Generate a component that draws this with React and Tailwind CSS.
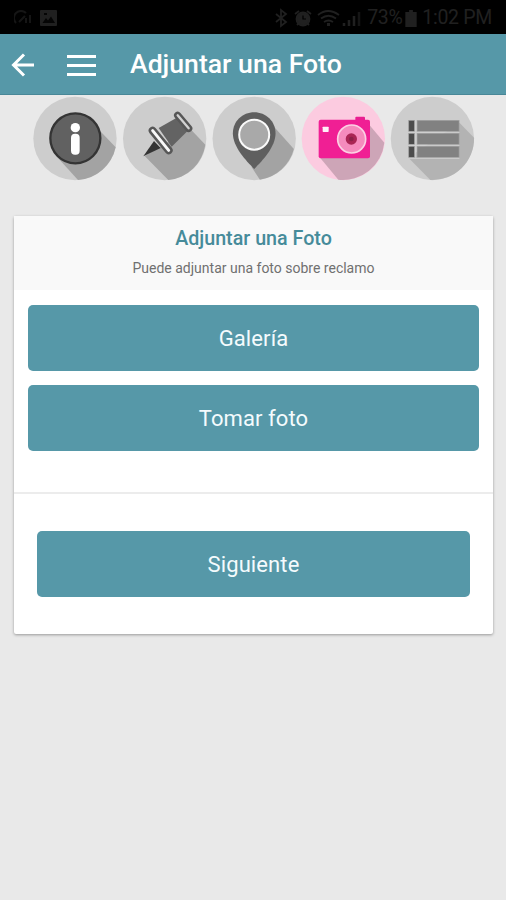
const STEPS = [
    {
        name: "info",
        viewBox: "15 12 252 252",
        art: (
            <>
                <circle cx="141" cy="139.5" r="125" fill="#cdcdcd" />
                <path d="M217 118 L263 166 A125 125 0 0 1 150 264 L88 196 Z" fill="#a3a3a3" />
                <circle cx="142" cy="139" r="75" fill="#616161" stroke="#343434" strokeWidth="7" />
                <circle cx="142" cy="107" r="14" fill="#fff" />
                <rect x="129" y="125" width="26" height="63" rx="12" fill="#fff" />
            </>
        ),
    },
    {
        name: "pin",
        viewBox: "12 12 252 252",
        art: (
            <>
                <circle cx="140" cy="139.5" r="125" fill="#cdcdcd" />
                <path d="M218 112 L262 158 A125 125 0 0 1 151 264 L80 192 L150 150 Z" fill="#a3a3a3" />
                <path d="M76 193 L108 147 L128 168 Z" fill="#343434" />
                <path d="M122 108 L175 78 L208 118 L161 164 Z" fill="#636363" />
                <path d="M104 116 L152 175" stroke="#575757" strokeWidth="24" strokeLinecap="round" />
                <path d="M104 116 L152 175" stroke="#f8f8f8" strokeWidth="9" strokeLinecap="round" />
                <path d="M179 70 L212 109" stroke="#575757" strokeWidth="22" strokeLinecap="round" />
                <path d="M179 70 L212 109" stroke="#d2d2d2" strokeWidth="7" strokeLinecap="round" />
            </>
        ),
    },
    {
        name: "place",
        viewBox: "11.4 12 252 252",
        art: (
            <>
                <circle cx="138" cy="139.5" r="125" fill="#cdcdcd" />
                <path d="M190 96 L257 171 A125 125 0 0 1 155 263 L130 225 Z" fill="#a3a3a3" />
                <path d="M138 61 C173 61 202 88 202 124 C202 164 165 204 138 231 C111 204 74 164 74 124 C74 88 103 61 138 61 Z" fill="#5f5f5f" />
                <circle cx="138" cy="128" r="45" fill="#a9a9a9" stroke="#fafafa" strokeWidth="6" />
            </>
        ),
    },
    {
        name: "photo",
        viewBox: "12 12 252 252",
        art: (
            <>
                <circle cx="139" cy="139.5" r="125" fill="#fccbe0" />
                <path d="M218 100 L262 152 A125 125 0 0 1 124 263 L68 196 Z" fill="#cda5b7" />
                <rect x="175" y="74" width="29" height="18" rx="3" fill="#e91e90" />
                <rect x="65" y="83" width="154" height="116" rx="6" fill="#f01f94" />
                <rect x="77" y="104" width="18" height="16" rx="2" fill="#fff0f8" />
                <circle cx="164" cy="141" r="42" fill="#f58bbd" stroke="#fcd0e4" strokeWidth="5" />
                <circle cx="163" cy="141" r="17" fill="#a92554" />
                <circle cx="163" cy="141" r="7" fill="#8c2148" />
            </>
        ),
    },
    {
        name: "list",
        viewBox: "13.8 12 252 252",
        art: (
            <>
                <circle cx="138" cy="139.5" r="125" fill="#cdcdcd" />
                <path d="M219 92 L263 137 A125 125 0 0 1 132 264 L66 197 Z" fill="#b3b3b3" />
                {[84, 123, 162].map((y) => (
                    <g key={y} stroke="#a0a0a0" strokeWidth="2">
                        <rect x="67" y={y + 1} width="17" height="33" fill="#4c4c4c" />
                        <rect x="92" y={y + 1} width="126" height="33" fill="#818181" />
                        <path d={`M88 ${y} V${y + 35} M66 ${y + 37} H219`} stroke="#cfcfcf" strokeWidth="3" />
                    </g>
                ))}
            </>
        ),
    },
];

const StatusBar = () => (
    <div className="h-[34px] shrink-0 bg-black flex items-center justify-between pt-[2px] pl-[14px] pr-[14px] text-[#202020]">
        <div className="flex items-center gap-[8px]">
            <svg width="18" height="16" viewBox="0 0 18 16" fill="none" stroke="#151515" strokeWidth="2">
                <path d="M2 13 A7 7 0 0 1 12 3 M5 12 L11 6 M12 8 V13 M16 5 V13" />
            </svg>
            <svg width="17" height="16" viewBox="0 0 17 16">
                <rect width="17" height="16" rx="1" fill="#202020" />
                <path d="M2.5 13 L6 8 L8 10.5 L11 6.5 L15 13 Z M4 3 H7 V5 H4 Z" fill="#050505" />
            </svg>
        </div>
        <div className="flex items-center">
            <svg width="93" height="20" viewBox="0 0 93 20" fill="none" stroke="#202020" strokeWidth="1.8">
                <path d="M2 6 L12 14 L7 18 V2 L12 6 L2 14" />
                <circle cx="29" cy="11" r="6.5" fill="#202020" />
                <path d="M21 6 L25 3 M37 6 L33 3 M23 17 L25 15 M35 17 L33 15" />
                <path d="M29 7.5 V11 H32" stroke="#000" strokeWidth="1.2" />
                <path d="M44 7 Q54 -1 65 7 M47 10.5 Q54.5 5 62 10.5 M50 14 Q54.5 11 59 14" />
                <path d="M54.5 15 V18" strokeWidth="3" />
                <path d="M70 18 V15 M75 18 V12 M80 18 V8" strokeWidth="2.5" />
                <path d="M85 18 V4" stroke="#151515" strokeWidth="2.5" />
            </svg>
            <span className="text-[19.5px] leading-none tracking-[-0.4px]">73%</span>
            <svg width="12" height="17" viewBox="0 0 12 18" className="ml-[3px] mr-[5px]" fill="#202020">
                <path d="M4 0 H8 V2 H12 V18 H0 V2 H4 Z" />
            </svg>
            <span className="text-[19.5px] leading-none tracking-[-0.3px]">1:02 PM</span>
        </div>
    </div>
);

const Header = () => (
    <header className="h-[61px] shrink-0 bg-[#5698a8] flex items-center pt-[2px] pl-[11px] border-b border-[#488797]">
        <button className="w-6 h-6">
            <svg width="24" height="24" viewBox="0 0 24 24" fill="none" stroke="#fff" strokeWidth="3">
                <path d="M23 12 H3 M13 1.5 L2.5 12 L13 22.5" />
            </svg>
        </button>
        <button className="ml-[32px] flex flex-col gap-[6px]">
            <span className="w-[29px] h-[3px] bg-white" />
            <span className="w-[29px] h-[3px] bg-white" />
            <span className="w-[29px] h-[3px] bg-white" />
        </button>
        <h1 className="ml-[34px] -mt-[1px] text-[26.6px] leading-none font-medium text-white whitespace-nowrap">Adjuntar una Foto</h1>
    </header>
);

const ActionButton = ({ children }) => (
    <button className="w-full h-[66px] rounded-[5px] bg-[#5698a8] text-[#f4fbfd] text-[22px] tracking-[0.1px]">
        {children}
    </button>
);

const App = () => {
    return (
        <div className="w-full h-screen bg-[#e9e9e9] flex flex-col overflow-hidden font-['Roboto',sans-serif]">
            <StatusBar />
            <Header />

            {/* Steps */}
            <nav className="pt-[1px] pl-[33px] flex gap-[5.4px]">
                {STEPS.map((step) => (
                    <svg key={step.name} width="84" height="84" viewBox={step.viewBox} className="shrink-0 overflow-visible">
                        {step.art}
                    </svg>
                ))}
            </nav>

            <main className="mt-[36px] ml-[14px] mr-[13px] h-[418px] bg-white rounded-[2px] shadow-[0_1px_3px_rgba(0,0,0,0.35)]">
                <div className="h-[74px] bg-[#f9f9f9] text-center pt-[11px]">
                    <h2 className="text-[19.7px] leading-[24px] font-medium text-[#468b9a]">Adjuntar una Foto</h2>
                    <p className="mt-[8px] text-[14px] leading-[18px] text-[#707070]">Puede adjuntar una foto sobre reclamo</p>
                </div>
                <div className="h-[204px] pt-[15px] px-[14px] flex flex-col gap-[14px] border-b-2 border-[#ececec]">
                    <ActionButton>Galería</ActionButton>
                    <ActionButton>Tomar foto</ActionButton>
                </div>
                <div className="pt-[37px] px-[23px]">
                    <ActionButton>Siguiente</ActionButton>
                </div>
            </main>
        </div>
    );
};

export default App;
